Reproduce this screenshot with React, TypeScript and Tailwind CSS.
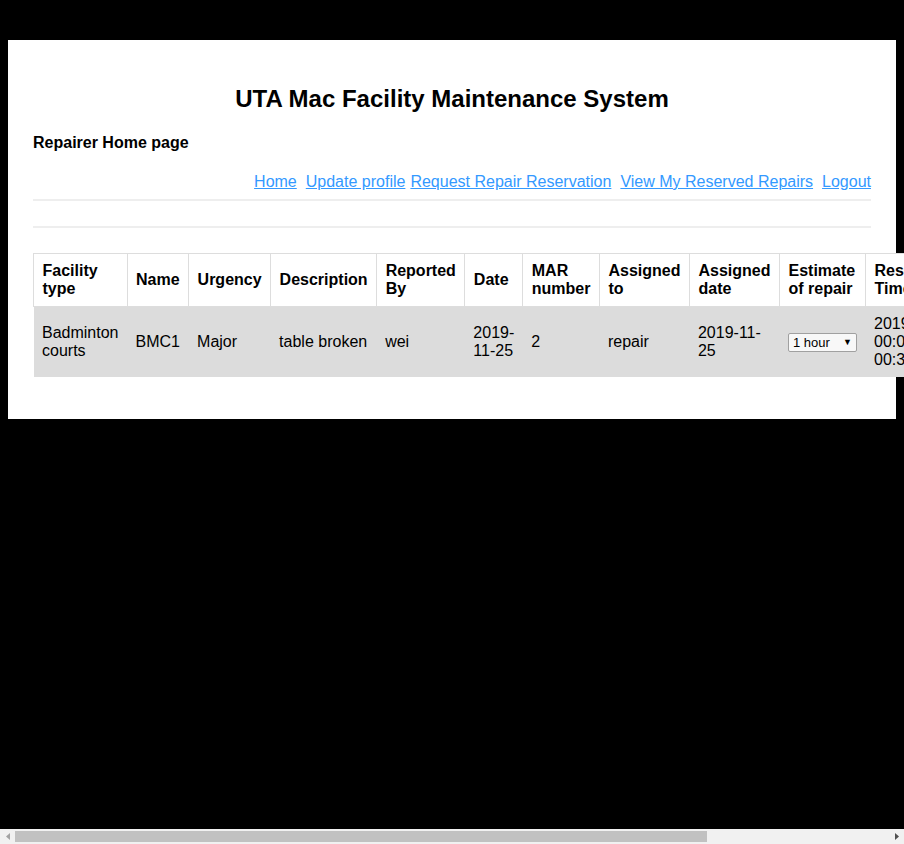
import { useState } from "react"

const headers = [
  "Facility type",
  "Name",
  "Urgency",
  "Description",
  "Reported By",
  "Date",
  "MAR number",
  "Assigned to",
  "Assigned date",
  "Estimate of repair",
  "Reserved Time",
  "Action",
]

export default function App() {
  const [estimate, setEstimate] = useState("1 hour")

  return (
    <div className="flex h-screen flex-col bg-black font-['Liberation_Sans',Arial,sans-serif] text-black">
      <div className="min-h-0 flex-1 overflow-hidden">
        <div className="mx-2 mt-10 bg-white px-[25px] pt-[45px] pb-[42px]">
          <h1 className="text-center text-[24px] font-bold leading-[28px]">UTA Mac Facility Maintenance System</h1>
          <h3 className="mt-[21px] text-[16px] font-bold leading-[18px]">Repairer Home page</h3>

          {/* nav links */}
          <div className="mt-[21px] flex justify-end text-[16px] leading-[18px] text-[#3399ff]">
            <a href="#" className="underline">Home</a>
            <a href="#" className="ml-[9px] underline">Update profile</a>
            <a href="#" className="ml-[5px] underline">Request Repair Reservation</a>
            <a href="#" className="ml-[9px] underline">View My Reserved Repairs</a>
            <a href="#" className="ml-[9px] underline">Logout</a>
          </div>

          <div className="mt-[8px] h-[2px] bg-[#eeeeee]" />
          <div className="mt-[25px] h-[2px] bg-[#eeeeee]" />

          <table className="mt-[25px] border-collapse text-[16px] leading-[normal]">
            <thead>
              <tr>
                {headers.map((h) => (
                  <th key={h} className="border border-[#dddddd] bg-white px-[8.5px] py-2 text-left align-middle font-bold">
                    {h}
                  </th>
                ))}
              </tr>
            </thead>
            <tbody>
              <tr className="bg-[#dcdcdc]">
                <td className="px-[8.5px] py-2 align-middle">Badminton courts</td>
                <td className="px-[8.5px] py-2 align-middle">BMC1</td>
                <td className="px-[8.5px] py-2 align-middle">Major</td>
                <td className="px-[8.5px] py-2 align-middle">table broken</td>
                <td className="px-[8.5px] py-2 align-middle">wei</td>
                <td className="px-[8.5px] py-2 align-middle">2019-11-25</td>
                <td className="px-[8.5px] py-2 align-middle">2</td>
                <td className="px-[8.5px] py-2 align-middle">repair</td>
                <td className="px-[8.5px] py-2 align-middle">2019-11-25</td>
                <td className="px-[8.5px] py-2 align-middle">
                  <span className="relative inline-block align-middle">
                    <select
                      value={estimate}
                      onChange={(e) => setEstimate(e.target.value)}
                      className="block h-[19px] w-[69px] appearance-none rounded-[2px] border border-[#a0a0a0] bg-[#f8f8f8] pl-[4px] text-[13px] leading-[17px]"
                    >
                      <option>1 hour</option>
                      <option>2 hours</option>
                      <option>3 hours</option>
                    </select>
                    <span className="pointer-events-none absolute right-[5px] top-[3px] text-[9px] leading-[12px]">▼</span>
                  </span>
                </td>
                <td className="px-[8.5px] py-2 align-middle">
                  <div className="w-[82px]">2019-11-25 00:00:00 - 00:30:00</div>
                </td>
                <td className="px-[8.5px] py-2 align-middle">
                  <button className="border border-[#a0a0a0] bg-[#f0f0f0] px-2 py-[1px] text-[13px]">Update</button>
                </td>
              </tr>
            </tbody>
          </table>
        </div>
      </div>

      {/* horizontal scrollbar */}
      <div className="flex h-[15px] shrink-0 items-center bg-[#f1f1f1]">
        <div className="flex w-[15px] justify-center">
          <svg width="4" height="7" viewBox="0 0 4 7">
            <path d="M4 0 L0 3.5 L4 7 Z" fill="#a3a3a3" />
          </svg>
        </div>
        <div className="flex h-full flex-1 items-center">
          <div className="h-[11px] w-[692px] bg-[#c1c1c1]" />
        </div>
        <div className="flex w-[15px] justify-center">
          <svg width="4" height="7" viewBox="0 0 4 7">
            <path d="M0 0 L4 3.5 L0 7 Z" fill="#505050" />
          </svg>
        </div>
      </div>
    </div>
  )
}
